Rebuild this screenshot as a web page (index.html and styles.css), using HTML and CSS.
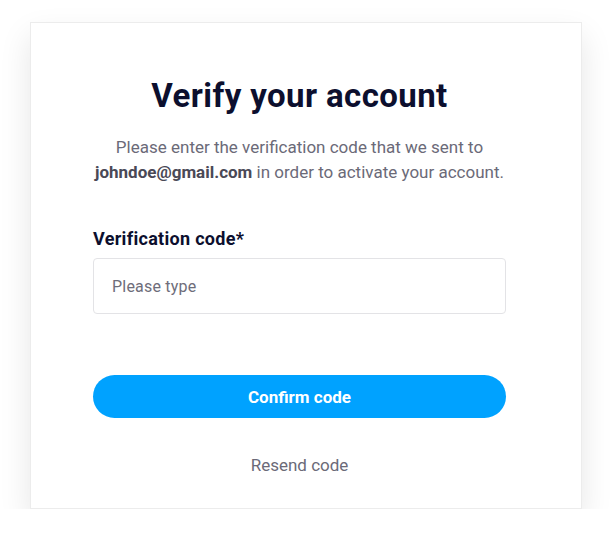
FILE: index.html
```html
<!DOCTYPE html>
<html lang="en">
<head>
<meta charset="utf-8">
<title>Verify your account</title>
<link rel="stylesheet" href="styles.css">
</head>
<body>
<main class="card">
  <h1 class="title">Verify your account</h1>
  <p class="intro">Please enter the verification code that we sent to<br><strong>johndoe@gmail.com</strong> in order to activate your account.</p>
  <form class="form">
    <label class="label" for="code">Verification code*</label>
    <input class="input" id="code" type="text" placeholder="Please type">
    <button class="btn" type="button">Confirm code</button>
    <a class="resend" href="#">Resend code</a>
  </form>
</main>
</body>
</html>
```

FILE: styles.css
```css
* { box-sizing: border-box; }
html, body { margin: 0; background: #ffffff; }
body {
  font-family: Roboto, "Liberation Sans", sans-serif;
  padding: 22px 0 0 30px;
}
.card {
  width: 552px;
  height: 487px;
  background: #fff;
  border: 1px solid #ececec;
  box-shadow: 0 14px 30px rgba(0, 0, 0, 0.1);
  padding: 53px 75px 0 62px;
  display: flex;
  flex-direction: column;
}
.title {
  margin: 0;
  font-size: 33px;
  line-height: 40px;
  font-weight: 700;
  color: #0c0f2e;
  text-align: center;
  letter-spacing: 0.4px;
}
.intro {
  margin: 19px 0 0;
  font-size: 17px;
  line-height: 25px;
  color: #6b6a78;
  text-align: center;
}
.intro strong { color: #4a4956; font-weight: 700; }
.form {
  display: flex;
  flex-direction: column;
  margin-top: 44px;
}
.label {
  font-size: 18px;
  line-height: 20px;
  font-weight: 700;
  color: #0c0f2e;
  letter-spacing: 0.3px;
}
.input {
  margin-top: 9px;
  height: 56px;
  border: 1px solid #e3e3e6;
  border-radius: 4px;
  padding: 0 18px;
  font-family: inherit;
  font-size: 16px;
  letter-spacing: 0.2px;
  color: #333;
  outline: none;
}
.input::placeholder { color: #6e6d7a; }
.btn {
  margin-top: 61px;
  height: 43px;
  border: none;
  border-radius: 22px;
  background: #00a2ff;
  color: #fff;
  font-family: inherit;
  font-size: 17px;
  font-weight: 700;
  cursor: pointer;
}
.resend {
  margin-top: 37px;
  font-size: 17px;
  line-height: 20px;
  color: #6b6a78;
  text-align: center;
  text-decoration: none;
}
```
